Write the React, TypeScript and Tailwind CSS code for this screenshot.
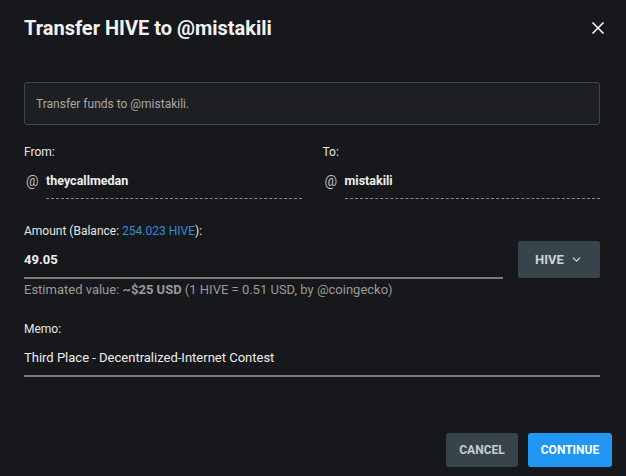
import React from 'react';
import { X, ChevronDown } from 'lucide-react';

const font = { fontFamily: 'Roboto, "Liberation Sans", sans-serif' };

const UserField: React.FC<{ label: string; name: string }> = ({ label, name }) => (
  <div className="flex flex-col">
    <div className="text-[12px] leading-[18px] text-[#e6e6e6]">{label}</div>
    <div className="mt-[10px] flex items-center">
      <span className="w-[22px] pl-[2px] text-[14px] leading-[20px] text-[#bdbdbd]">@</span>
      <span className="text-[12.5px] leading-[20px] font-bold text-[#eeeeee]">{name}</span>
    </div>
    <div className="ml-[22px] mt-[7px] border-b border-dashed border-[#8a8a8a]" />
  </div>
);

export default function App() {
  return (
    <div className="w-[626px] h-[476px] bg-[#17181b] text-white relative overflow-hidden" style={font}>
      <div className="flex items-center justify-between pl-6 pr-[18px] pt-[14px]">
        <h1 className="text-[20px] leading-[28px] font-bold text-[#f2f2f2]">Transfer HIVE to @mistakili</h1>
        <X size={20} strokeWidth={2} className="text-white" />
      </div>

      <div className="pl-6 pr-[26px]">
        <div className="mt-[40px] h-[43px] flex items-center px-[11px] rounded-[3px] border border-[#3d4a4d] bg-[#1e1f22] text-[12px] text-[#a8a8a8]">
          Transfer funds to @mistakili.
        </div>

        <div className="mt-[18px] grid grid-cols-2 gap-[21px]">
          <UserField label="From:" name="theycallmedan" />
          <UserField label="To:" name="mistakili" />
        </div>

        <div className="mt-[23px] flex items-start gap-[15px]">
          <div className="flex-1">
            <div className="text-[12px] leading-[18px] text-[#e6e6e6]">
              Amount (Balance: <span className="text-[#2f8ddb]">254.023 HIVE</span>):
            </div>
            <div className="mt-[11px] text-[13px] leading-[18px] font-bold text-[#eeeeee]">49.05</div>
            <div className="mt-[8px] h-[2px] bg-[#7b7b7b]" />
          </div>
          <button className="mt-[19px] w-[82px] h-[37px] rounded-[2px] bg-[#37454b] flex items-center justify-center gap-[6px] text-[13px] font-bold text-[#cfd3d5]">
            HIVE
            <ChevronDown size={13} strokeWidth={2.5} />
          </button>
        </div>
        <div className="mt-[2px] text-[13px] leading-[18px] text-[#9a9a9a] whitespace-nowrap">
          Estimated value: <span className="font-bold">~$25 USD</span> (1 HIVE = 0.51 USD, by @coingecko)
        </div>

        <div className="mt-[21px] text-[12px] leading-[18px] text-[#e6e6e6]">Memo:</div>
        <div className="mt-[11px] text-[13px] leading-[18px] text-[#eeeeee]">Third Place - Decentralized-Internet Contest</div>
        <div className="mt-[8px] h-[2px] bg-[#7b7b7b]" />

        <div className="mt-[56px] flex justify-end gap-[10px] -mr-[12px]">
          <button className="w-[72px] h-[34px] rounded-[3px] bg-[#37454b] text-[12px] font-bold text-[#c9cdd0]">CANCEL</button>
          <button className="w-[84px] h-[34px] rounded-[3px] bg-[#2196f3] text-[12px] font-bold text-white">CONTINUE</button>
        </div>
      </div>
    </div>
  );
}
